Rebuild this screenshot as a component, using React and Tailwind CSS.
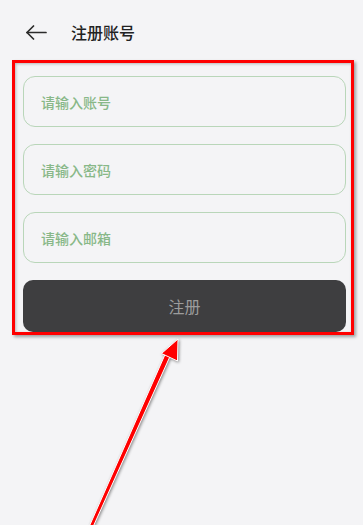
import React, { useState } from 'react';

const fields = [
  { key: 'account', placeholder: '请输入账号', type: 'text' },
  { key: 'password', placeholder: '请输入密码', type: 'password' },
  { key: 'email', placeholder: '请输入邮箱', type: 'email' },
];

const BackArrow = () => (
  <svg width="21" height="15" viewBox="0 0 21 15" fill="none" stroke="#2b2b2b" strokeWidth="1.7" strokeLinecap="round" strokeLinejoin="round">
    <path d="M1 7.5H20" />
    <path d="M7.5 1L1 7.5L7.5 14" />
  </svg>
);

// hand-drawn annotation arrow pointing at the form
const PointerArrow = () => (
  <svg className="absolute left-0 top-0 pointer-events-none drop-shadow-[1px_1px_1.5px_rgba(0,0,0,0.45)]" width="363" height="525" viewBox="0 0 363 525">
    <g stroke="#ffffff" strokeWidth="1" strokeLinejoin="round" fill="#ff0000">
      <polygon points="89,527 93,527 172,352 167,350" />
      <polygon points="178,339 161.5,353.5 177.5,361" />
    </g>
  </svg>
);

const App = () => {
  const [values, setValues] = useState({ account: '', password: '', email: '' });

  return (
    <div className="relative w-[363px] h-[525px] overflow-hidden bg-[#f4f4f6]" style={{ fontFamily: '"Noto Sans CJK SC", "Noto Sans", sans-serif' }}>
      <div className="h-[60px] pt-[4px] flex items-center">
        <button className="ml-[26px] flex items-center">
          <BackArrow />
        </button>
        <h1 className="ml-[24px] text-[16px] font-medium text-[#222222]">注册账号</h1>
      </div>

      <div className="ml-[12px] w-[342px] border-[3px] border-[#ff0000] pt-[13px] pl-[8px] pr-[5px] flex flex-col gap-[17px] shadow-[2px_2px_3px_rgba(0,0,0,0.35),inset_1px_1px_3px_rgba(0,0,0,0.25)]">
        {fields.map((f) => (
          <input
            key={f.key}
            type={f.type}
            value={values[f.key]}
            placeholder={f.placeholder}
            onChange={(e) => setValues({ ...values, [f.key]: e.target.value })}
            className="w-[323px] h-[51px] px-[17px] rounded-[12px] border border-[#b9d6b9] bg-transparent text-[14px] font-medium text-[#333] placeholder:text-[#88b888] focus:outline-none"
          />
        ))}
        <button className="w-[323px] h-[52px] rounded-[10px] bg-[#3e3e40] text-[16px] text-[#9c9c9c]">
          注册
        </button>
      </div>

      <PointerArrow />
    </div>
  );
};

export default App;
